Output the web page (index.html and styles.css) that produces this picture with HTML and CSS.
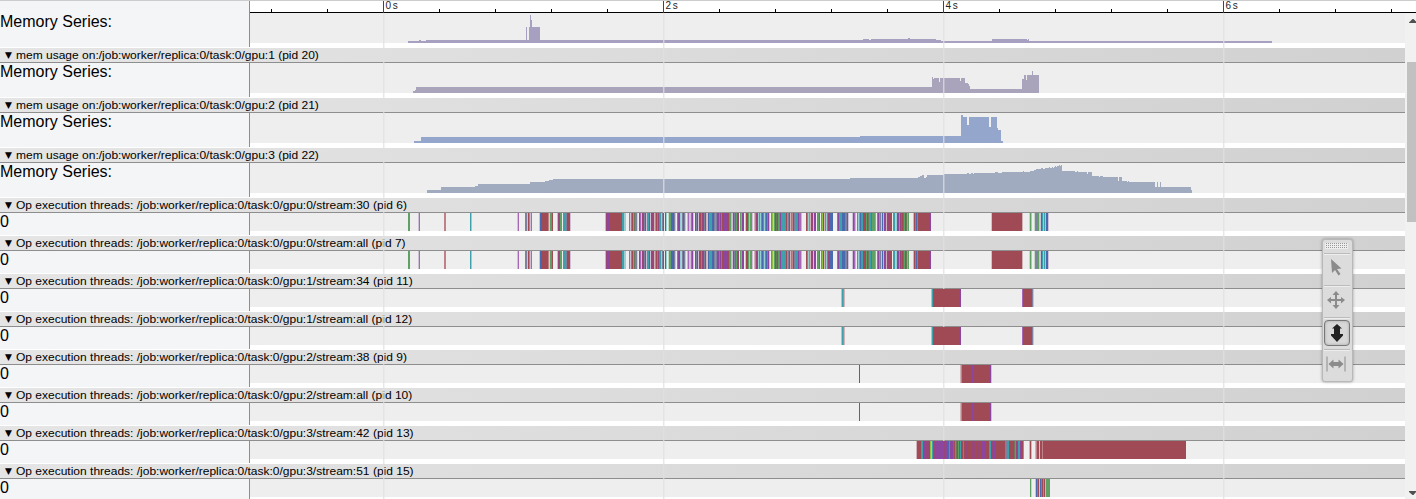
FILE: index.html
```html
<!DOCTYPE html>
<html lang="en">
<head>
<meta charset="utf-8">
<title>Trace viewer</title>
<link rel="stylesheet" href="styles.css">
</head>
<body>
<div class="viewer">
  <div class="ruler-row">
    <div class="ruler-heading"></div>
    <svg class="ruler" id="ruler" width="1166" height="12"></svg>
  </div>
  <div class="body">
    <div class="tracks" id="tracks"></div>
    <div class="scrollbar">
      <svg class="arrow" width="9" height="14"><path d="M2 10h7V8.500L6.500 6h-1L2 9.500z" fill="#505050"/></svg>
      <div class="thumb"></div>
      <svg class="arrow arrow-down" width="9" height="14"><path d="M2 6h7v1L6.500 10h-1L2 7z" fill="#505050"/></svg>
    </div>
  </div>
  <svg class="grid" width="1155" height="486">
    <g fill="#e0e0e0" fill-opacity=".75">
      <path d="M133 0h1v486h-1zM413 0h1v486h-1zM693 0h1v486h-1zM973 0h1v486h-1z"/>
      <path fill-opacity=".35" d="M134 0h1v486h-1zM414 0h1v486h-1zM694 0h1v486h-1zM974 0h1v486h-1z"/>
    </g>
  </svg>
  <div class="toolbar">
    <div class="grip"></div>
    <div class="tool"><svg width="26" height="28"><path d="M8 5l10.500 9.500-4.500.5 3.500 5-2 1.500-3.500-5.500-3 3z" fill="#8b8b8b"/></svg></div>
    <div class="tool"><svg width="26" height="28"><path d="M13 5l3.500 4h-2.500v4h4v-2l4 3-4 3.500v-2.500h-4v4h2.500L13 23l-3.500-4H12v-4H8v2.500L4 14l4-3v2h4V9H9.500z" fill="#8b8b8b"/></svg></div>
    <div class="tool selected"><svg width="24" height="24"><path d="M12 3l5 4.500h-2V13h3v1.500L12 21l-6-6.500V13h3V7.500H7z" fill="#222"/></svg></div>
    <div class="tool"><svg width="26" height="28"><path d="M3.500 6.500h1v15h-1zM21.500 6.500h1v15h-1zM5.500 14l5-4.500V12h5V9.500l5 4.500-5 4.500V16h-5v2.500z" fill="#8b8b8b"/></svg></div>
  </div>
</div>
<script src="trace.js"></script>
</body>
</html>
```
FILE: styles.css
```css
body {
  margin: 0;
  background: #fff;
  color: #000;
  font-family: "Liberation Sans", Arial, sans-serif;
  overflow: hidden;
}
.viewer {
  position: relative;
  box-sizing: border-box;
  width: 1416px;
  height: 499px;
  overflow: hidden;
  border-top: 1px solid #ccc;
}
.ruler-row { display: flex; height: 12px; }
.ruler-heading, .heading {
  box-sizing: border-box;
  width: 250px;
  flex: none;
  background: #f4f5f7;
  border-right: 1px solid #8e8e8e;
}
.ruler { display: block; font-size: 10px; word-spacing: -1px; }
.body { display: flex; height: 486px; }
.tracks { width: 1405px; flex: none; overflow: hidden; }
.process {
  box-sizing: border-box;
  height: 15px;
  padding-left: 5px;
  display: flex;
  align-items: center;
  background: linear-gradient(to right, #e5e5e5, #d1d1d1);
  border-bottom: 1px solid #8e8e8e;
  font-size: 11px;
  line-height: 14px;
  white-space: pre;
}
.triangle { width: 11px; font-family: "DejaVu Sans", sans-serif; font-size: 9px; }
.name { transform: scaleX(1.091); transform-origin: left center; }
.track { display: flex; height: 35px; }
.track.threads { height: 23px; }
.heading { height: calc(100% - 1px); font-size: 16px; line-height: 18px; }
.plot { display: block; background: #eee; }
.threads .plot { position: relative; z-index: 2; background: none; }
.lane { height: 18px; background: #eee; }
.scrollbar {
  width: 11px;
  display: flex;
  flex-direction: column;
  background: #f1f1f1;
}
.arrow { display: block; margin-left: 2px; flex: none; }
.thumb { margin: 35px 0 0 2px; height: 160px; background: #c1c1c1; }
.arrow-down { margin-top: auto; }
.grid { position: absolute; left: 250px; top: 12px; z-index: 1; }
.toolbar {
  position: absolute;
  left: 1322px;
  top: 238px;
  z-index: 3;
  box-sizing: border-box;
  width: 31px;
  height: 143px;
  padding: 1px;
  background: #dcdcdc;
  border: 1px solid #b8b8b8;
  border-radius: 3px;
  box-shadow: 0 0 3px rgba(0, 0, 0, .35);
}
.grip {
  height: 6px;
  margin: 2px 3px 4px 1px;
  background: conic-gradient(#999 25%, #eee 0) 0 0 / 2px 2px;
}
.tool {
  box-sizing: border-box;
  height: 32px;
  margin-right: 1px;
  padding: 0 2px 3px 0;
  border-top: 1px solid #bbb;
  box-shadow: inset 0 1px #eee;
  display: flex;
  justify-content: center;
  align-items: center;
}
.tool svg { display: block; flex: none; }
.tool.selected { padding: 0 1px 1px 0; }
.selected svg {
  border: 1px solid #777;
  border-radius: 4px;
  background: #d8d8d8;
  box-shadow: inset 0 0 3px rgba(0, 0, 0, .25);
}
```
FILE: trace.js
```js
const X0 = 250;
const colors = {
  r: '#a04a55', p: '#8c46a0', g: '#5fa065', t: '#3da0aa', b: '#4a6ab0',
  l: '#cfc0d8', k: '#d0b4b8', L: '#8fbf40', c: '#98cdd2', s: '#7e80a0',
  o: '#6c7858', m: '#98457a', v: '#a868b8', q: '#c08088', e: '#c5d8c8'
};

// Each pair: start position, one colour code per pixel column.
const stream0 = [
  [408, 'gg'], [418, 'lv'], [444, 'qq'], [470, 'tc'], [517, 'lv'],
  [525, 'sslrqlv'], [539, 'lbrrrrrrrqegsr'], [557, 'kmrgg ttgsmrpl'],
  [605, 'kmppmrrrrrrrrrrrrttcc'],
  [629, 'slgrqosse pvlmpsrlgtblpmrkqrvmvtcsm rc esgbbpsl vpmcLL'],
  [681, 'lspsl kvllspl psmlskgmpsrk lkbgstlpsrm  lrgtss qtggr'],
  [699, 'mrg'], [707, 'lbtttbmsqsmpspsrppppmrsgklmsogbm'],
  [740, 'gLpp'], [745, 'lrmgcgtl kqmrctctbtctbv'],
  [767, 'vpl gLlgrorgspttgtt'], [786, 'rqsrkgqrsgtspvvc'],
  [806, 'rgcqkrmlpr sgo gLmpl'], [824, 'ktcsmpbbb'],
  [837, 'spgttbbbtspl'], [852, 'lpvc'], [857, 'tcqbstmrmgpogtogggL'],
  [877, 'tpqslbcpbkpmrrm'], [893, 'ttlc'], [897, 'mpqmorogroLg'],
  [913, 'krtbgrrrrrrrrrprrp'],
  [991, 'l' + 'r'.repeat(30) + 'k'], [1029, 'egc'],
  [1034, 'egsggllptctcbpl']
];
const gpu1 = [
  [841, 'ctqk'], [931, 'ctbrrrprrrrrrrrrrrrrrrrrrrrrpp'],
  [1022, 'vprrrrrrrrsl']
];
const gpu2 = [[859, 'p'], [960, 'kqrrrrrrrrrrprrrrrrrrrrrrrrprrpl']];
const gpu3 = [
  [916, 'krrrrttmpmmmmmLctbmrprppprprmmppbsppporgorgrtmrsrpm' +
    'rrrrrmmmrrrmrrmpppprrrttmmmpprrrprprrrtsstmrrrmogmptgpmrq'],
  [1029, 'krk'], [1035, 'kqrrlrrqr' + 'r'.repeat(142)]
];
const gpu3b = [[1030, 'ge'], [1035, 'lbsrlbtrqrkgggt']];

// Memory counters: [x, height] steps, closed by the last entry.
const mem0 = [[408,2],[419,3],[421,2],[426,3],[526,16],[527,3],[529,16],[530,28],[531,23],[532,16],
  [540,3],[863,4],[869,3],[871,4],[908,5],[910,4],[936,3],[941,2],
  [992,4],[1027,3],[1028,4],[1029,2],[1272,0]];
const mem1 = [[413,2],[415,3],[416,6],[932,16],[933,14],[934,15],[939,11],[940,15],[960,12],[961,15],
  [965,10],[968,9],[969,7],[970,4],[1022,14],[1024,18],[1026,13],[1027,18],[1032,22],[1033,18],[1039,0]];
const mem2 = [[414,2],[421,6],[860,7],[961,28],[963,26],[967,18],[969,26],[989,16],[991,26],[997,15],
  [998,13],[1001,2],[1003,0]];
const mem3 = [[427,3],[441,6],[475,7],[478,9],[530,11],[545,12],[549,13],[553,14],[850,15],[918,16],
  [920,17],[922,18],[924,15],[926,16],[927,18],[944,19],[967,20],[969,19],[971,20],[973,19],[974,20],
  [995,21],[998,20],[1002,21],[1023,22],[1024,21],[1030,22],[1034,23],[1036,24],[1041,25],[1043,24],
  [1045,25],[1049,26],[1050,25],[1052,26],[1053,25],[1054,26],[1055,27],[1056,26],[1057,27],[1059,28],
  [1060,27],[1061,28],[1062,22],[1075,21],[1077,22],[1078,21],[1087,19],[1088,21],[1092,17],[1099,16],
  [1100,17],[1103,16],[1118,12],[1119,16],[1122,12],[1127,11],[1128,12],[1129,11],[1155,6],[1157,11],
  [1158,6],[1160,11],[1161,6],[1191,3],[1192,0]];

const rows = [
  { mem: mem0, fill: '#a7a0c0' },
  { name: 'mem usage on:/job:worker/replica:0/task:0/gpu:1 (pid 20)', mem: mem1, fill: '#a9a3bc' },
  { name: 'mem usage on:/job:worker/replica:0/task:0/gpu:2 (pid 21)', mem: mem2, fill: '#95a6cd' },
  { name: 'mem usage on:/job:worker/replica:0/task:0/gpu:3 (pid 22)', mem: mem3, fill: '#a1abc0' },
  { name: 'Op execution threads: /job:worker/replica:0/task:0/gpu:0/stream:30 (pid 6)', ops: stream0 },
  { name: 'Op execution threads: /job:worker/replica:0/task:0/gpu:0/stream:all (pid 7)', ops: stream0 },
  { name: 'Op execution threads: /job:worker/replica:0/task:0/gpu:1/stream:34 (pid 11)', ops: gpu1 },
  { name: 'Op execution threads: /job:worker/replica:0/task:0/gpu:1/stream:all (pid 12)', ops: gpu1 },
  { name: 'Op execution threads: /job:worker/replica:0/task:0/gpu:2/stream:38 (pid 9)', ops: gpu2 },
  { name: 'Op execution threads: /job:worker/replica:0/task:0/gpu:2/stream:all (pid 10)', ops: gpu2 },
  { name: 'Op execution threads: /job:worker/replica:0/task:0/gpu:3/stream:42 (pid 13)', ops: gpu3 },
  { name: 'Op execution threads: /job:worker/replica:0/task:0/gpu:3/stream:51 (pid 15)', ops: gpu3b }
];

function memoryPlot(row) {
  let d = `M${row.mem[0][0] - X0} 30`;
  for (const [x, h] of row.mem) d += `H${x - X0}V${30 - h}`;
  return `<svg class="plot" width="1155" height="30"><path d="${d}Z" fill="${row.fill}"/></svg>`;
}

function opsPlot(row) {
  let rects = '';
  for (const [start, codes] of row.ops) {
    let i = 0;
    while (i < codes.length) {
      let j = i;
      while (codes[j] === codes[i]) j++;
      if (colors[codes[i]]) {
        rects += `<rect x="${start + i - X0}" width="${j - i}" height="18" fill="${colors[codes[i]]}"/>`;
      }
      i = j;
    }
  }
  return `<div class="lane"><svg class="plot" width="1155" height="18">${rects}</svg></div>`;
}

document.getElementById('tracks').innerHTML = rows.map(row =>
  (row.name ? `<div class="process"><span class="triangle">▼</span><span class="name">${row.name}</span></div>` : '') +
  `<div class="track ${row.mem ? 'memory' : 'threads'}">` +
  `<div class="heading">${row.mem ? 'Memory Series:' : '0'}</div>` +
  (row.mem ? memoryPlot(row) : opsPlot(row)) + '</div>'
).join('');

let marks = '<rect y="11" width="1166" height="1" fill="#000"/>';
for (let i = 0; i < 21; i++) {
  const x = 21 + i * 56;
  const major = i % 5 === 2;
  marks += `<rect x="${x}" y="${major ? 0 : 8}" width="1" height="${major ? 12 : 4}" fill="${major ? '#444' : '#000'}"/>`;
  if (major) marks += `<text x="${x + 2.5}" y="8" fill="#222">${(i - 2) / 5 * 2} s</text>`;
}
document.getElementById('ruler').innerHTML = marks;
```
